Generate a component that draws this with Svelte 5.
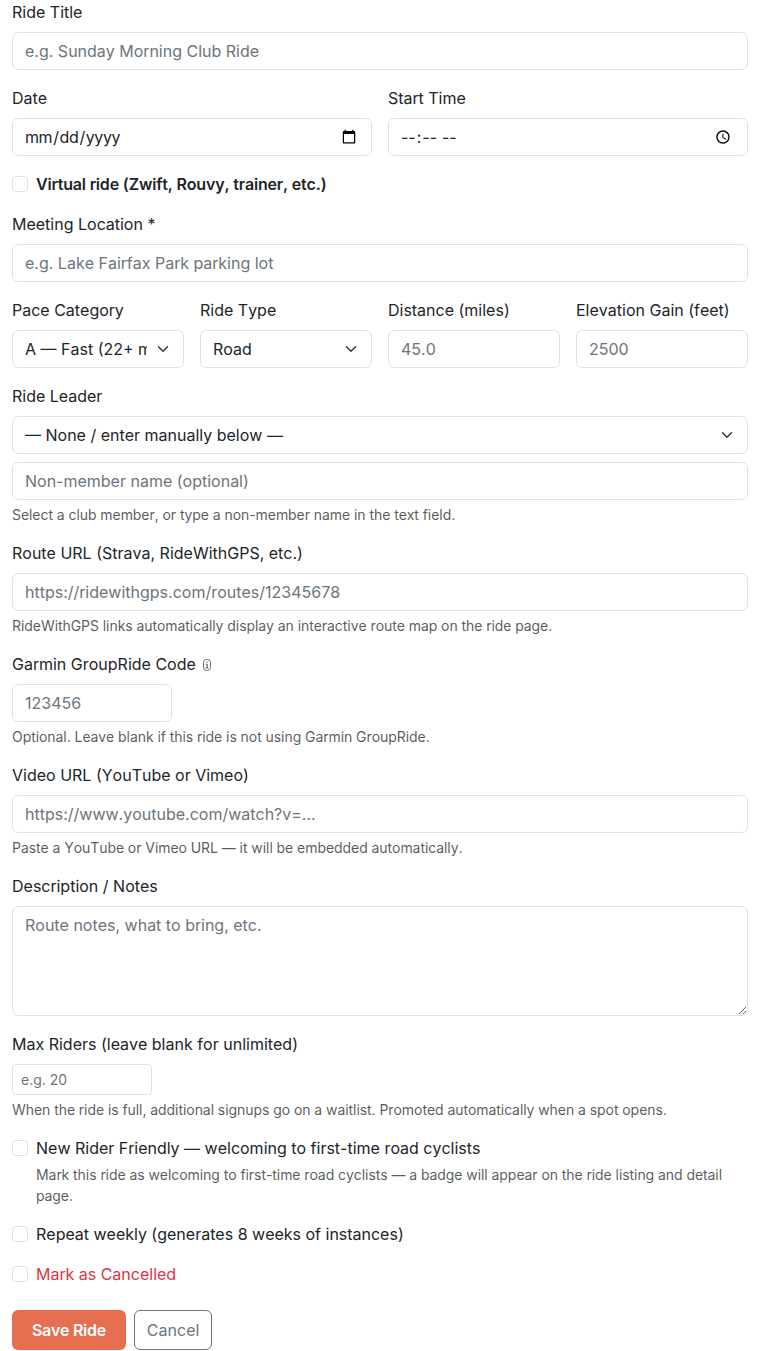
<script>
	const paceOptions = ['A — Fast (22+ mph)', 'B — Moderate (18–22 mph)', 'C — Casual (14–18 mph)'];
	const rideTypes = ['Road', 'Gravel', 'Mountain', 'Virtual'];
</script>

<form class="ride-form" on:submit|preventDefault>
	<div class="field">
		<label for="title">Ride Title</label>
		<input id="title" class="control" type="text" placeholder="e.g. Sunday Morning Club Ride" />
	</div>

	<div class="row two">
		<div>
			<label for="date">Date</label>
			<input id="date" class="control" type="date" />
		</div>
		<div>
			<label for="time">Start Time</label>
			<input id="time" class="control time" type="time" />
		</div>
	</div>

	<div class="check">
		<input id="virtual" type="checkbox" />
		<label for="virtual" class="strong">Virtual ride (Zwift, Rouvy, trainer, etc.)</label>
	</div>

	<div class="field">
		<label for="location">Meeting Location *</label>
		<input id="location" class="control" type="text" placeholder="e.g. Lake Fairfax Park parking lot" />
	</div>

	<div class="row four">
		<div>
			<label for="pace">Pace Category</label>
			<select id="pace" class="control select">
				{#each paceOptions as option}
					<option>{option}</option>
				{/each}
			</select>
		</div>
		<div>
			<label for="type">Ride Type</label>
			<select id="type" class="control select">
				{#each rideTypes as option}
					<option>{option}</option>
				{/each}
			</select>
		</div>
		<div>
			<label for="distance">Distance (miles)</label>
			<input id="distance" class="control" type="text" placeholder="45.0" />
		</div>
		<div>
			<label for="elevation">Elevation Gain (feet)</label>
			<input id="elevation" class="control" type="text" placeholder="2500" />
		</div>
	</div>

	<div class="field">
		<label for="leader">Ride Leader</label>
		<select id="leader" class="control select">
			<option>— None / enter manually below —</option>
		</select>
		<input class="control second" type="text" placeholder="Non-member name (optional)" aria-label="Non-member name" />
		<p class="hint">Select a club member, or type a non-member name in the text field.</p>
	</div>

	<div class="field">
		<label for="route">Route URL (Strava, RideWithGPS, etc.)</label>
		<input id="route" class="control" type="text" placeholder="https://ridewithgps.com/routes/12345678" />
		<p class="hint">RideWithGPS links automatically display an interactive route map on the ride page.</p>
	</div>

	<div class="field">
		<label for="garmin">
			Garmin GroupRide Code
			<svg class="info" viewBox="0 0 8 12" width="8" height="12" aria-hidden="true">
				<rect x="0.5" y="0.5" width="7" height="11" rx="3" fill="none" stroke="#666" />
				<path d="M2.8 5.2h1.4v3.6M2.6 8.9h2.8M4.1 2.6v1.2" fill="none" stroke="#555" />
			</svg>
		</label>
		<input id="garmin" class="control code" type="text" placeholder="123456" />
		<p class="hint">Optional. Leave blank if this ride is not using Garmin GroupRide.</p>
	</div>

	<div class="field">
		<label for="video">Video URL (YouTube or Vimeo)</label>
		<input id="video" class="control" type="text" placeholder="https://www.youtube.com/watch?v=..." />
		<p class="hint">Paste a YouTube or Vimeo URL — it will be embedded automatically.</p>
	</div>

	<div class="field">
		<label for="notes">Description / Notes</label>
		<textarea id="notes" class="control" rows="4" placeholder="Route notes, what to bring, etc."></textarea>
	</div>

	<div class="field">
		<label for="max">Max Riders (leave blank for unlimited)</label>
		<input id="max" class="control small" type="text" placeholder="e.g. 20" />
		<p class="hint">When the ride is full, additional signups go on a waitlist. Promoted automatically when a spot opens.</p>
	</div>

	<div class="check">
		<input id="friendly" type="checkbox" />
		<div>
			<label for="friendly">New Rider Friendly — welcoming to first-time road cyclists</label>
			<p class="hint">Mark this ride as welcoming to first-time road cyclists — a badge will appear on the ride listing and detail page.</p>
		</div>
	</div>

	<div class="check">
		<input id="repeat" type="checkbox" />
		<label for="repeat">Repeat weekly (generates 8 weeks of instances)</label>
	</div>

	<div class="check last">
		<input id="cancelled" type="checkbox" />
		<label for="cancelled" class="danger">Mark as Cancelled</label>
	</div>

	<div class="actions">
		<button type="submit" class="save">Save Ride</button>
		<button type="button" class="cancel">Cancel</button>
	</div>
</form>

<style>
	:global(body) {
		background: #fff;
		color: #212529;
		font-family: Inter, 'Liberation Sans', sans-serif;
		font-size: 16px;
		line-height: 1.5;
		font-kerning: none;
	}

	.ride-form {
		padding: 0 12px;
	}

	.field {
		margin-bottom: 16px;
	}

	.row {
		display: grid;
		gap: 16px;
		margin-bottom: 16px;
	}

	.two {
		grid-template-columns: repeat(2, minmax(0, 1fr));
	}

	.four {
		grid-template-columns: repeat(4, minmax(0, 1fr));
	}

	label {
		display: block;
		margin-bottom: 8px;
	}

	.control {
		display: block;
		box-sizing: border-box;
		width: 100%;
		height: 38px;
		margin: 0;
		padding: 6px 12px;
		border: 1px solid #dee2e6;
		border-radius: 6px;
		background-color: #fff;
		color: #212529;
		font-family: inherit;
		font-size: 16px;
		line-height: 24px;
		font-kerning: inherit;
		appearance: none;
	}

	.control::placeholder {
		color: #6c757d;
		opacity: 1;
	}

	.control::-webkit-datetime-edit {
		margin-left: -1px;
		letter-spacing: -0.4px;
	}

	.time::-webkit-datetime-edit {
		letter-spacing: -0.7px;
	}

	.select {
		padding-right: 36px;
		background-image: url("data:image/svg+xml,%3csvg xmlns='http://www.w3.org/2000/svg' viewBox='0 0 16 16'%3e%3cpath fill='none' stroke='%23343a40' stroke-linecap='round' stroke-linejoin='round' stroke-width='2' d='m2 5 6 6 6-6'/%3e%3c/svg%3e");
		background-repeat: no-repeat;
		background-position: right 12px center;
		background-size: 16px 12px;
	}

	.second {
		margin-top: 8px;
	}

	.code {
		width: 160px;
	}

	.small {
		width: 140px;
		height: 31px;
		padding: 4px 8px;
		border-radius: 4px;
		font-size: 14px;
		line-height: 21px;
	}

	textarea.control {
		height: 110px;
		resize: vertical;
	}

	.info {
		vertical-align: -1px;
		margin-left: 3px;
	}

	.hint {
		margin: 4px 0 0;
		color: rgba(33, 37, 41, 0.75);
		font-size: 14px;
		line-height: 21px;
		letter-spacing: -0.06px;
	}

	.check {
		display: flex;
		gap: 8px;
		margin-bottom: 16px;
	}

	.check.last {
		margin-bottom: 24px;
	}

	.check input {
		flex: none;
		width: 16px;
		height: 16px;
		margin: 4px 0 0;
		border: 1px solid #dee2e6;
		border-radius: 4px;
		background: #fff;
		appearance: none;
	}

	.check label {
		margin-bottom: 0;
	}

	.strong {
		font-weight: 600;
		letter-spacing: -0.17px;
	}

	.danger {
		color: #dc3545;
	}

	.actions {
		display: flex;
		gap: 8px;
	}

	.actions button {
		font-family: inherit;
		font-size: 16px;
		line-height: 24px;
		font-kerning: inherit;
		border-radius: 6px;
	}

	.save {
		padding: 8px 20px;
		border: none;
		background: #e76f51;
		color: #fff;
		font-weight: 600;
		letter-spacing: -0.3px;
	}

	.cancel {
		padding: 6px 12px;
		border: 1px solid #6c757d;
		background: transparent;
		color: #6c757d;
	}
</style>
